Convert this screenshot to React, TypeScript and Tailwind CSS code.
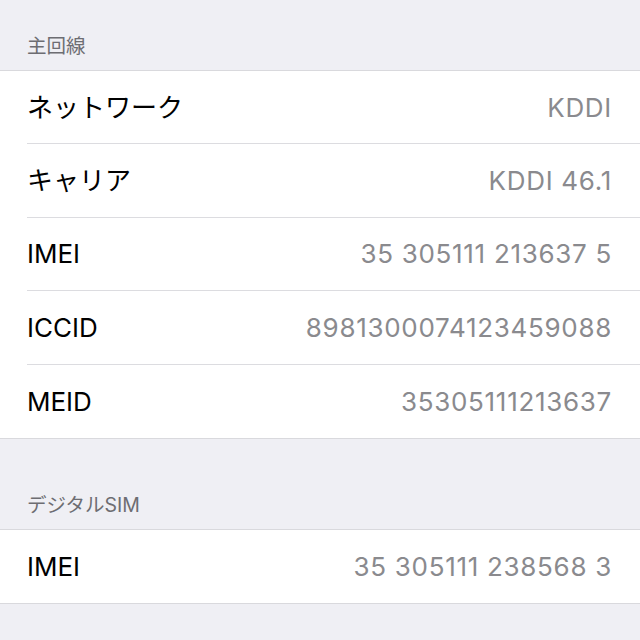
const FONT =
  "font-['Inter','Noto_Sans_CJK_JP','Liberation_Sans',sans-serif]";

type Row = { label: string; value: string };

const MAIN: Row[] = [
  { label: "ネットワーク", value: "KDDI" },
  { label: "キャリア", value: "KDDI 46.1" },
  { label: "IMEI", value: "35 305111 213637 5" },
  { label: "ICCID", value: "8981300074123459088" },
  { label: "MEID", value: "35305111213637" },
];

const DIGITAL: Row[] = [{ label: "IMEI", value: "35 305111 238568 3" }];

function Group({ rows }: { rows: Row[] }) {
  return (
    <div className="bg-white border-y border-[#d9d9dd]">
      {rows.map((r, i) => (
        <div key={r.label + i} className="pl-[27px]">
          <div
            className={`h-[73.4px] flex items-center justify-between pr-[28px] ${
              i < rows.length - 1 ? "border-b border-[#dcdce0]" : ""
            }`}
          >
            <span className="text-[26px] text-black">{r.label}</span>
            <span className="text-[26px] tracking-[0.7px] text-[#8a8a8e]">{r.value}</span>
          </div>
        </div>
      ))}
    </div>
  );
}

export default function App() {
  return (
    <div className={`${FONT} bg-[#efeff4] min-h-[640px] w-[640px] overflow-hidden`}>
      {/* 主回線 */}
      <div className="h-[70px] flex items-end pb-[12px] pl-[27px]">
        <span className="text-[19.5px] leading-[24px] text-[#6d6d72]">主回線</span>
      </div>
      <Group rows={MAIN} />

      {/* デジタルSIM */}
      <div className="h-[90px] flex items-end pb-[12px] pl-[27px]">
        <span className="text-[19.5px] leading-[24px] text-[#6d6d72]">デジタルSIM</span>
      </div>
      <Group rows={DIGITAL} />
    </div>
  );
}
